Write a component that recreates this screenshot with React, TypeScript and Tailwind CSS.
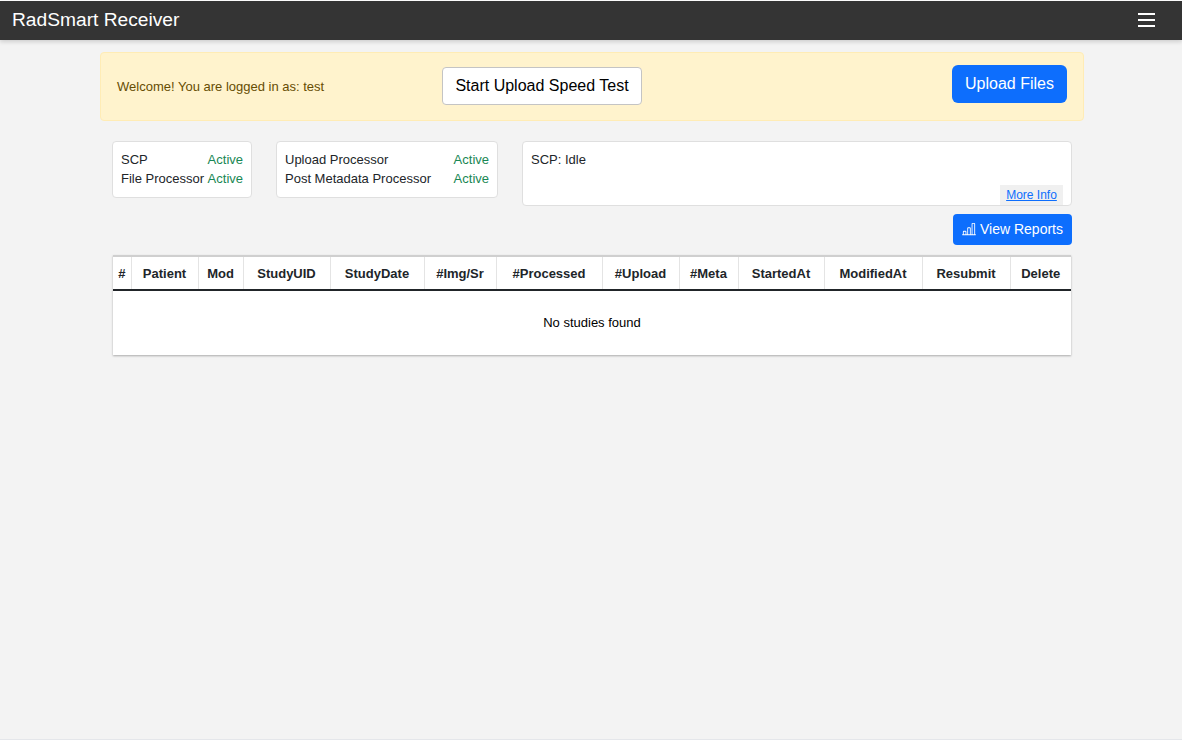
import { BsBarChartLine } from "react-icons/bs";

const columns = [
  { label: "#", width: "w-[18px]" },
  { label: "Patient", width: "w-[67px]" },
  { label: "Mod", width: "w-[45px]" },
  { label: "StudyUID", width: "w-[87px]" },
  { label: "StudyDate", width: "w-[94px]" },
  { label: "#Img/Sr", width: "w-[72px]" },
  { label: "#Processed", width: "w-[106px]" },
  { label: "#Upload", width: "w-[77px]" },
  { label: "#Meta", width: "w-[59px]" },
  { label: "StartedAt", width: "w-[86px]" },
  { label: "ModifiedAt", width: "w-[98px]" },
  { label: "Resubmit", width: "w-[88px]" },
  { label: "Delete", width: "w-[61px]" },
];

function StatusRow({ name }: { name: string }) {
  return (
    <div className="flex h-[19px] items-center justify-between whitespace-nowrap">
      <span>{name}</span>
      <span className="text-[#198754]">Active</span>
    </div>
  );
}

export default function App() {
  return (
    <div className="flex h-[740px] flex-col overflow-hidden bg-white pt-px font-['Liberation_Sans',Arial,sans-serif] text-[13px] text-[#212529]">
      <div className="flex min-h-0 flex-1 flex-col border-b border-[#e4e6ea] bg-[#f3f3f3]">
        <nav className="flex h-[39px] shrink-0 items-center justify-between bg-[#343434] pl-3 pr-[27px] shadow-[0_2px_4px_rgba(0,0,0,0.15)]">
          <span className="text-[19.2px] text-white">RadSmart Receiver</span>
          <svg width="17" height="15" viewBox="0 0 17 15" aria-label="Open menu">
            <path d="M0 1H17M0 7H17M0 13H17" stroke="#fff" strokeWidth="2" />
          </svg>
        </nav>

        <main className="flex flex-col pl-[100px] pr-[98px] pt-3">
          <div className="flex h-[69px] items-start rounded border border-[#ffecb5] bg-[#fff3cd] px-4 pt-3 text-[#664d03]">
            <span className="mt-3 w-[325px]">Welcome! You are logged in as: test</span>
            <button
              type="button"
              className="mt-[2px] h-[38px] w-[200px] rounded border border-[#c4c4c4] bg-white text-base text-black"
            >
              Start Upload Speed Test
            </button>
            <button
              type="button"
              className="ml-auto h-[38px] w-[115px] rounded-md bg-[#0d6efd] text-base text-white"
            >
              Upload Files
            </button>
          </div>

          <div className="mx-3 flex flex-col">
            <div className="mt-5 flex items-start gap-6">
              <div className="h-[57px] w-[140px] rounded border border-[#dfdfdf] bg-white p-2">
                <StatusRow name="SCP" />
                <StatusRow name="File Processor" />
              </div>
              <div className="h-[57px] w-[222px] rounded border border-[#dfdfdf] bg-white p-2">
                <StatusRow name="Upload Processor" />
                <StatusRow name="Post Metadata Processor" />
              </div>
              <div className="relative h-[65px] w-[550px] rounded border border-[#dfdfdf] bg-white p-2">
                <div className="flex h-[19px] items-center">SCP: Idle</div>
                <a
                  href="#"
                  className="absolute bottom-0 right-[8px] flex h-5 w-[63px] items-center justify-center bg-[#f0f0f0] text-xs text-[#0d6efd] underline"
                >
                  More Info
                </a>
              </div>
            </div>

            <div className="mt-2 flex justify-end">
              <button
                type="button"
                className="flex h-[31px] w-[119px] items-center justify-center gap-1 rounded bg-[#0d6efd] pb-px text-sm text-white"
              >
                <BsBarChartLine className="size-[14px]" />
                View Reports
              </button>
            </div>

            <div className="ml-px mt-[10px] w-[958px] border-t-2 border-[#cfcfcf] bg-white shadow-[0_1px_2px_rgba(0,0,0,0.3)]">
              <table className="w-full table-fixed border-collapse">
                <thead>
                  <tr className="h-[33px] border-b-2 border-[#212529]">
                    {columns.map((col) => (
                      <th
                        key={col.label}
                        className={`${col.width} border-r border-[#e4e4e4] p-0 pt-px text-center font-bold last:border-r-0`}
                      >
                        {col.label}
                      </th>
                    ))}
                  </tr>
                </thead>
                <tbody>
                  <tr>
                    <td colSpan={columns.length} className="h-[65px] p-0 text-center text-black">
                      No studies found
                    </td>
                  </tr>
                </tbody>
              </table>
            </div>
          </div>
        </main>
      </div>
    </div>
  );
}
